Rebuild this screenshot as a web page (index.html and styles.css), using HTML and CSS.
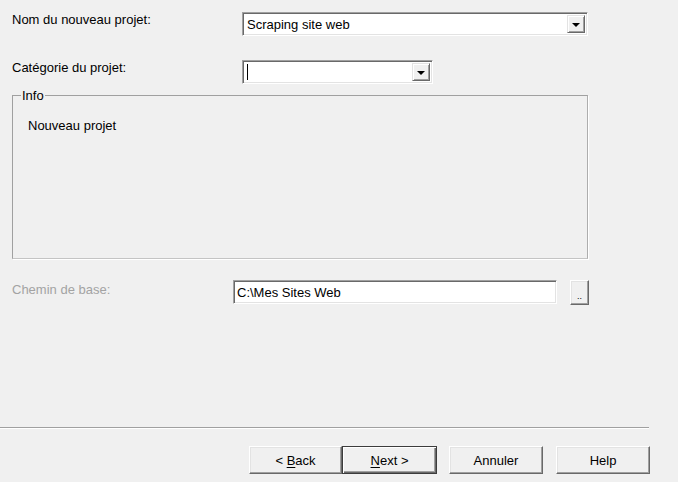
FILE: index.html
```html
<!DOCTYPE html>
<html lang="fr">
<head>
<meta charset="utf-8">
<link rel="stylesheet" href="styles.css">
</head>
<body>
<div class="dialog">
  <div class="form-row row-name">
    <span class="label">Nom du nouveau projet:</span>
    <div class="combo combo-wide">
      <span class="combo-text">Scraping site web</span>
      <span class="combo-btn"><span class="arrow"></span></span>
    </div>
  </div>
  <div class="form-row row-cat">
    <span class="label">Catégorie du projet:</span>
    <div class="combo combo-narrow">
      <span class="combo-text"><span class="caret"></span></span>
      <span class="combo-btn"><span class="arrow"></span></span>
    </div>
  </div>
  <fieldset class="group">
    <legend class="group-title">Info</legend>
    <p class="group-text">Nouveau projet</p>
  </fieldset>
  <div class="form-row row-path">
    <span class="label label-disabled">Chemin de base:</span>
    <div class="textbox">C:\Mes Sites Web</div>
    <button class="browse">..</button>
  </div>
  <div class="spacer"></div>
  <div class="separator"></div>
  <div class="buttons">
    <button class="btn btn-back">&lt; <u>B</u>ack</button>
    <button class="btn btn-next btn-default"><u>N</u>ext &gt;</button>
    <button class="btn btn-cancel">Annuler</button>
    <button class="btn btn-help">Help</button>
  </div>
</div>
</body>
</html>
```

FILE: styles.css
```css
html, body {
  margin: 0;
  padding: 0;
  background: #f0f0f0;
}
body {
  font-family: "Liberation Sans", Arial, sans-serif;
  font-size: 13px;
  color: #000;
}
.dialog {
  width: 678px;
  height: 482px;
  display: flex;
  flex-direction: column;
  box-sizing: border-box;
}
.form-row {
  display: flex;
  align-items: flex-start;
  padding-left: 12px;
}
.row-name { margin-top: 12px; }
.row-cat { margin-top: 24px; }
.label {
  display: block;
  width: 230px;
  flex: none;
  padding-top: 0;
  line-height: 15px;
}
.label-disabled {
  color: #a3a3a3;
  width: 221px;
  padding-top: 2px;
}
.combo {
  display: flex;
  height: 24px;
  box-sizing: border-box;
  background: #fff;
  border: 1px solid;
  border-color: #a0a0a0 #ffffff #ffffff #a0a0a0;
  box-shadow: inset 1px 1px 0 #696969, inset -1px -1px 0 #e3e3e3;
  padding: 2px 2px 2px 3px;
}
.combo-wide { width: 346px; }
.combo-narrow { width: 191px; }
.combo-text {
  flex: 1;
  line-height: 17px;
  padding-left: 1px;
  display: flex;
  align-items: center;
}
.caret {
  display: block;
  width: 0;
  height: 16px;
  border-left: 1px solid #000;
}
.combo-btn {
  width: 18px;
  height: 18px;
  flex: none;
  box-sizing: border-box;
  background: #f0f0f0;
  border: 1px solid;
  border-color: #e3e3e3 #696969 #696969 #e3e3e3;
  box-shadow: inset 1px 1px 0 #fff, inset -1px -1px 0 #a0a0a0;
  display: flex;
  align-items: center;
  justify-content: center;
}
.arrow {
  display: block;
  width: 0;
  height: 0;
  border-left: 4px solid transparent;
  border-right: 4px solid transparent;
  border-top: 4px solid #000;
  margin-top: 1px;
}
.group {
  margin: 4px 0 0 12px;
  width: 576px;
  height: 171px;
  box-sizing: border-box;
  padding: 0 0 0 15px;
  border: 1px solid #a0a0a0;
  border-right-color: #adadad;
  border-bottom-color: #c4c4c4;
  box-shadow: 1px 1px 0 #fff;
}
.group-title {
  margin-left: -7px;
  padding: 0 1px;
  line-height: 15px;
}
.group-text {
  margin: 15px 0 0 0;
  line-height: 15px;
}
.row-path { margin-top: 21px; align-items: flex-start; }
.textbox {
  width: 324px;
  height: 24px;
  box-sizing: border-box;
  background: #fff;
  border: 1px solid;
  border-color: #a0a0a0 #ffffff #ffffff #a0a0a0;
  box-shadow: inset 1px 1px 0 #696969, inset -1px -1px 0 #e3e3e3;
  padding: 3px 3px 0 3px;
  line-height: 17px;
}
.browse {
  margin-left: 13px;
  width: 19px;
  height: 25px;
  padding: 0;
  font-family: inherit;
  font-size: 9px;
  line-height: 1;
  padding-top: 8px;
  background: #f0f0f0;
  border: 1px solid;
  border-color: #fff #696969 #696969 #fff;
  box-shadow: inset -1px -1px 0 #a0a0a0, inset 1px 1px 0 #e3e3e3;
  color: #000;
}
.spacer { flex: 1; }
.separator {
  width: 649px;
  height: 1px;
  background: #a0a0a0;
  border-bottom: 1px solid #fff;
}
.buttons {
  display: flex;
  padding: 17px 28px 8px 0;
  justify-content: flex-end;
}
.btn {
  height: 28px;
  width: 94px;
  padding: 0;
  font-family: inherit;
  font-size: 13px;
  color: #000;
  background: #f0f0f0;
  border: 1px solid;
  border-color: #fff #696969 #696969 #fff;
  box-shadow: inset -1px -1px 0 #a0a0a0, inset 1px 1px 0 #e3e3e3;
}
.btn u { text-decoration: underline; text-underline-offset: 2px; }
.btn-back { width: 93px; }
.btn-default {
  width: 95px;
  border-color: #3c3c3c;
  box-shadow: inset 1px 1px 0 #fff, inset -1px -1px 0 #696969, inset -2px -2px 0 #a0a0a0;
}
.btn-cancel { margin-left: 12px; }
.btn-help { margin-left: 13px; width: 94px; }
```
